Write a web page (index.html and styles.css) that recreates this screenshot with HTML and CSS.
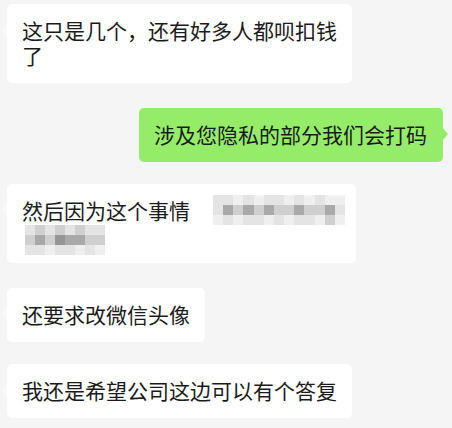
FILE: index.html
```html
<!DOCTYPE html>
<html lang="zh-CN">
<head>
<meta charset="utf-8">
<title>聊天</title>
<link rel="stylesheet" href="styles.css">
</head>
<body>
<div class="chat">
  <div class="msg left gap-a">
    <div class="bubble">这只是几个，还有好多人都呗扣钱了</div>
  </div>
  <div class="msg right gap-b">
    <div class="bubble green">涉及您隐私的部分我们会打码</div>
  </div>
  <div class="msg left gap-c">
    <div class="bubble wide">
      <div class="line">然后因为这个事情</div>
      <div class="line">&nbsp;</div>
      <div class="mosaic m1">
        <i class="c2"></i><i class="c2"></i><i class="c1"></i><i class="c2"></i><i class="c1"></i><i class="c2"></i><i class="c2"></i><i class="c1"></i><i class="c2"></i><i class="c1"></i><i class="c2"></i><i class="c1"></i><i class="c1"></i>
        <i class="c2"></i><i class="c4"></i><i class="c3"></i><i class="c4"></i><i class="c3"></i><i class="c4"></i><i class="c3"></i><i class="c3"></i><i class="c4"></i><i class="c3"></i><i class="c3"></i><i class="c4"></i><i class="c2"></i>
        <i class="c1"></i><i class="c2"></i><i class="c1"></i><i class="c2"></i><i class="c2"></i><i class="c1"></i><i class="c2"></i><i class="c1"></i><i class="c2"></i><i class="c2"></i><i class="c1"></i><i class="c3"></i><i class="c1"></i>
      </div>
      <div class="mosaic m2">
        <i class="c2"></i><i class="c3"></i><i class="c2"></i><i class="c3"></i><i class="c2"></i><i class="c3"></i><i class="c2"></i><i class="c2"></i>
        <i class="c3"></i><i class="c4"></i><i class="c3"></i><i class="c5"></i><i class="c4"></i><i class="c4"></i><i class="c3"></i><i class="c3"></i>
        <i class="c2"></i><i class="c2"></i><i class="c1"></i><i class="c2"></i><i class="c2"></i><i class="c1"></i><i class="c2"></i><i class="c1"></i>
      </div>
    </div>
  </div>
  <div class="msg left gap-b">
    <div class="bubble">还要求改微信头像</div>
  </div>
  <div class="msg left gap-c">
    <div class="bubble">我还是希望公司这边可以有个答复</div>
  </div>
</div>
</body>
</html>
```
FILE: styles.css
```css
html, body {
  margin: 0;
  padding: 0;
  background: #f5f5f5;
}

body {
  width: 452px;
  height: 428px;
  overflow: hidden;
  font-family: "Noto Sans CJK SC", "Noto Sans", sans-serif;
  color: #1b1b1b;
}

.chat {
  display: flex;
  flex-direction: column;
  padding: 4px 9px 0 7px;
}

.msg {
  display: flex;
}

.msg.left { justify-content: flex-start; }
.msg.right { justify-content: flex-end; }

.gap-b { margin-top: 25px; }
.gap-c { margin-top: 22px; }

.bubble {
  position: relative;
  background: #ffffff;
  border-radius: 5px;
  padding: 14px 15px 15px 15px;
  font-size: 21px;
  line-height: 25px;
  max-width: 315px;
  word-break: break-all;
}

.bubble::before {
  content: "";
  position: absolute;
  top: 20px;
  left: -5px;
  border-style: solid;
  border-width: 6px 5px 6px 0;
  border-color: transparent #fafafa transparent transparent;
}

.bubble.green {
  background: #95ec69;
  padding-right: 16px;
}

.bubble.green::before {
  left: auto;
  right: -5px;
  border-width: 6px 0 6px 5px;
  border-color: transparent transparent transparent #95ec69;
}

.bubble.wide {
  width: 319px;
  max-width: none;
}

.line {
  height: 25px;
}

.mosaic {
  position: absolute;
  display: grid;
  grid-auto-rows: 10px;
}

.mosaic.m1 {
  top: 11px;
  left: 206px;
  width: 132px;
  grid-template-columns: repeat(13, 1fr);
}

.mosaic.m2 {
  top: 41px;
  left: 18px;
  width: 80px;
  grid-template-columns: repeat(8, 1fr);
}

.mosaic i { display: block; }
.c1 { background: #efefef; }
.c2 { background: #e4e4e4; }
.c3 { background: #cfcfcf; }
.c4 { background: #a9a9a9; }
.c5 { background: #959595; }
```
